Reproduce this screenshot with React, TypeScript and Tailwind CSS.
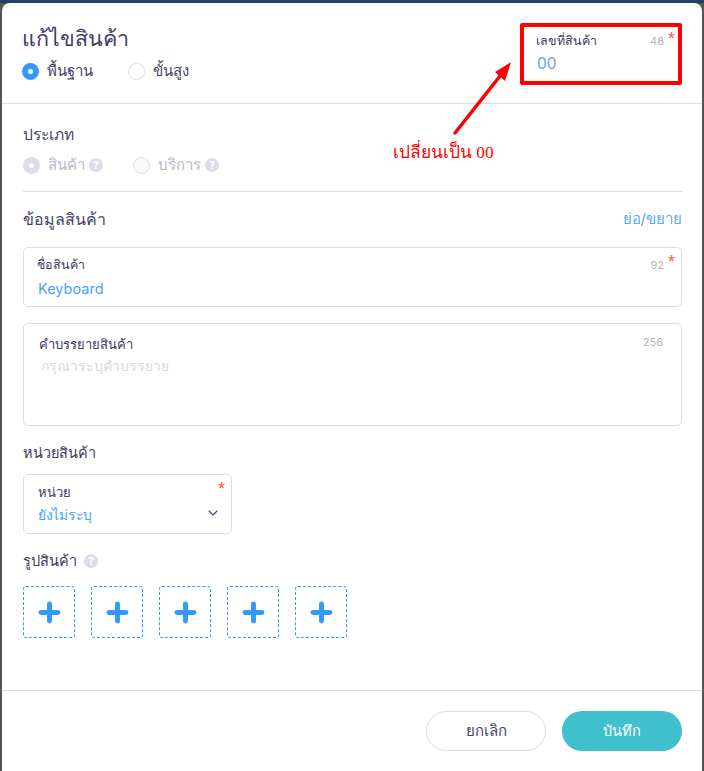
import { ChevronDown, Plus } from 'lucide-react';

const thai = "font-['Inter','Noto_Sans','Noto_Sans_CJK_SC',sans-serif]";

function Radio({ label, on, disabled, help }: { label: string; on?: boolean; disabled?: boolean; help?: boolean }) {
  const dot = on
    ? disabled
      ? 'border-[6px] border-[#dddce8] bg-white'
      : 'border-[6px] border-[#3399ff] bg-white'
    : disabled
      ? 'border border-[#dddce8] bg-[#f9f9fc]'
      : 'border border-[#dddce8] bg-white';
  return (
    <div className="flex items-center">
      <span className={`w-[17px] h-[17px] rounded-full ${dot}`} />
      <span className={`ml-2 text-[15px] leading-5 ${disabled ? 'text-[#b9b8cb]' : 'text-[#45446a]'}`}>{label}</span>
      {help && <Help className="ml-[4px]" />}
    </div>
  );
}

function Help({ className = '' }: { className?: string }) {
  return (
    <span className={`w-[14px] h-[14px] rounded-full bg-[#dddce8] text-white text-[10px] leading-[14px] font-bold text-center ${className}`}>?</span>
  );
}

function Star({ className = '' }: { className?: string }) {
  return <span className={`absolute text-[#ff5c39] text-[18px] leading-4 font-['Liberation_Sans',sans-serif] ${className}`}>*</span>;
}

function AddImage() {
  return (
    <div className="w-[52px] h-[52px] rounded-[3px] border border-dashed border-[#3399ff] flex items-center justify-center">
      <Plus size={29} strokeWidth={4.1} className="text-[#3399ff]" />
    </div>
  );
}

export default function App() {
  return (
    <div className={`w-[704px] h-[771px] overflow-hidden bg-[#555555] border-t-[3px] border-t-[#24415f] px-[2px] ${thai}`}>
      <div className="relative w-[700px] h-[768px] bg-white rounded-t-[8px] flex flex-col">
        <header className="h-[101px] shrink-0 border-b border-[#dddce8] pl-5 pr-5 flex justify-between">
          <div>
            <h1 className="mt-[20px] text-[21.5px] leading-[30px] text-[#3d3c63]">แก้ไขสินค้า</h1>
            <div className="mt-[8px] flex gap-[35px]">
              <Radio label="พื้นฐาน" on />
              <Radio label="ขั้นสูง" />
            </div>
          </div>
          <div className="relative mt-5 w-[162px] h-[62px] border-[4px] border-[#ff0000] rounded-[2px] pl-[12px] pt-[4px]">
            <div className="text-[12.5px] leading-5 text-[#3d3c63]">เลขที่สินค้า</div>
            <div className="mt-[3px] ml-px text-[15.5px] leading-5 text-[#6a9cf5]">00</div>
            <span className="absolute right-[14px] top-[6px] text-[11px] leading-4 text-[#b5b4b4]">48</span>
            <Star className="right-[3px] top-[4px]" />
          </div>
        </header>

        <main className="flex-1 pl-[21px] pr-[20px]">
          <h2 className="mt-[20px] text-[15.5px] leading-[22px] text-[#45446a]">ประเภท</h2>
          <div className="mt-[9px] flex gap-[30px]">
            <Radio label="สินค้า" on disabled help />
            <Radio label="บริการ" disabled help />
          </div>

          <div className="mt-[16px] border-t border-[#dddce8]" />

          <div className="mt-[16px] flex justify-between items-center">
            <h2 className="text-[16px] leading-[22px] text-[#45446a]">ข้อมูลสินค้า</h2>
            <button className="text-[15px] leading-5 text-[#5aa9f5]">ย่อ/ขยาย</button>
          </div>

          <div className="relative mt-[17px] h-[60px] border border-[#dddce8] rounded-[5px] pl-[13px] pt-[7px]">
            <div className="text-[12.5px] leading-5 text-[#3d3c63]">ชื่อสินค้า</div>
            <div className="mt-[4px] ml-px text-[14.5px] leading-5 text-[#4ba3fa]">Keyboard</div>
            <span className="absolute right-[17px] top-[9px] text-[11px] leading-4 text-[#b5b4b4]">92</span>
            <Star className="right-[6px] top-[6px]" />
          </div>

          <div className="relative mt-4 h-[103px] border border-[#dddce8] rounded-[5px] pl-[15px] pt-[10px]">
            <div className="text-[13px] leading-5 text-[#3d3c63]">คำบรรยายสินค้า</div>
            <div className="mt-[2px] ml-[2px] text-[14px] leading-5 text-[#d8d7e2]">กรุณาระบุคำบรรยาย</div>
            <span className="absolute right-[18px] top-[10px] text-[11px] leading-4 text-[#b5b4b4]">256</span>
          </div>

          <h2 className="mt-[16px] text-[14.5px] leading-[22px] text-[#3d3c63]">หน่วยสินค้า</h2>

          <div className="relative mt-[10px] w-[209px] h-[60px] border border-[#dddce8] rounded-[5px] pl-[14px] pt-[7px]">
            <div className="text-[13px] leading-5 text-[#3d3c63]">หน่วย</div>
            <div className="mt-[3px] text-[14px] tracking-[-0.3px] leading-5 text-[#4ba3fa]">ยังไม่ระบุ</div>
            <Star className="right-[6px] top-[6px]" />
            <ChevronDown size={16} strokeWidth={1.6} className="absolute right-[10px] top-[30px] text-[#45446a]" />
          </div>

          <div className="mt-[16px] flex items-center">
            <h2 className="text-[14.5px] leading-[22px] text-[#3d3c63]">รูปสินค้า</h2>
            <Help className="ml-[7px]" />
          </div>

          <div className="mt-[14px] flex gap-4">
            <AddImage />
            <AddImage />
            <AddImage />
            <AddImage />
            <AddImage />
          </div>
        </main>

        <footer className="h-[81px] shrink-0 border-t border-[#dddce8] px-5 pt-5 flex justify-end gap-4">
          <button className="w-[120px] h-10 rounded-full border border-[#dddce8] bg-white text-[15px] text-[#45446a]">ยกเลิก</button>
          <button className="w-[120px] h-10 rounded-full bg-[#3fc0cc] text-[14.5px] text-white">บันทึก</button>
        </footer>

        {/* annotation drawn over the form */}
        <svg className="absolute left-[450px] top-[55px]" width="70" height="80" viewBox="0 0 70 80">
          <path d="M3 75 L48 18" stroke="#ff0000" strokeWidth="3.5" strokeLinecap="round" />
          <path d="M59 4 L43 14 L53 23 Z" fill="#ff0000" />
        </svg>
        <span className="absolute left-[391px] top-[138px] text-[17.3px] leading-6 text-[#ff0000] font-['Liberation_Serif',serif]">เปลี่ยนเป็น 00</span>
      </div>
    </div>
  );
}
